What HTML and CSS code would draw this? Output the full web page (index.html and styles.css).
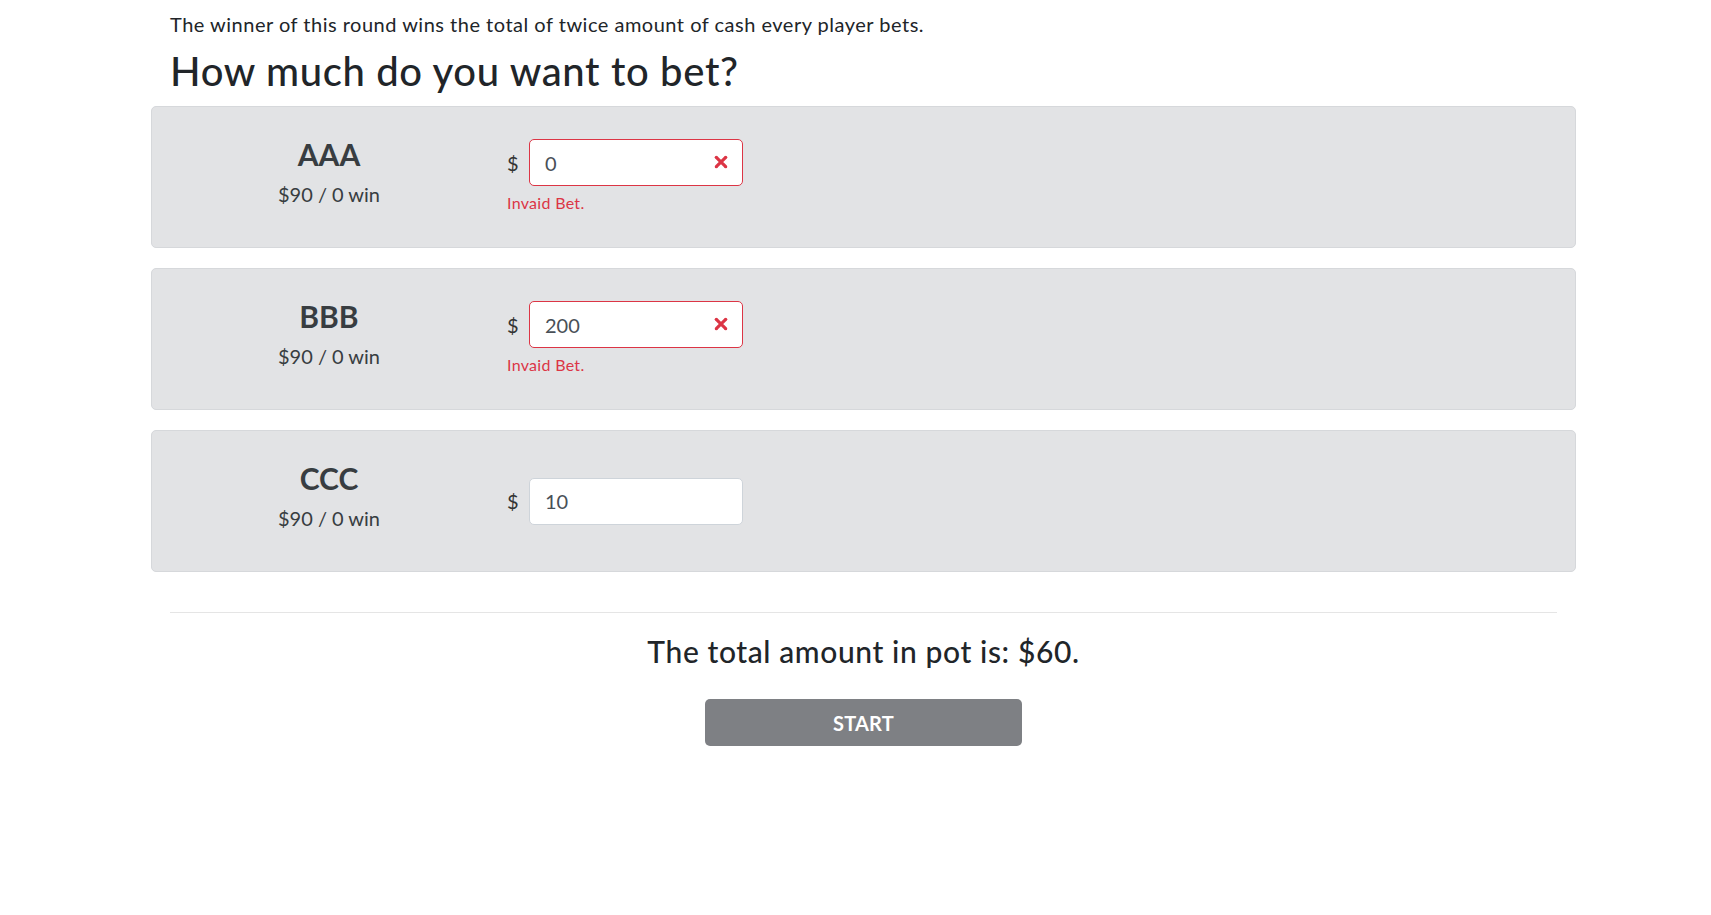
FILE: index.html
```html
<!DOCTYPE html>
<html lang="en">
<head>
<meta charset="utf-8">
<title>Bet</title>
<link rel="stylesheet" href="styles.css">
</head>
<body>
<div class="container">
  <p class="intro">The winner of this round wins the total of twice amount of cash every player bets.</p>
  <h2 class="title">How much do you want to bet?</h2>

  <div class="player">
    <div class="player-info">
      <div class="player-name">AAA</div>
      <div class="player-stats">$90 / 0 win</div>
    </div>
    <div class="bet">
      <div class="bet-group">
        <span class="currency">$</span>
        <div class="field">
          <input class="bet-input invalid" type="text" value="0">
          <svg class="invalid-icon" viewBox="-2 -2 7 7" width="22" height="22"><path stroke="#dc3545" stroke-width="1" d="M0 0l3 3m0-3L0 3"/><circle fill="#dc3545" r=".5"/><circle fill="#dc3545" cx="3" r=".5"/><circle fill="#dc3545" cy="3" r=".5"/><circle fill="#dc3545" cx="3" cy="3" r=".5"/></svg>
        </div>
      </div>
      <div class="feedback">Invaid Bet.</div>
    </div>
  </div>

  <div class="player">
    <div class="player-info">
      <div class="player-name">BBB</div>
      <div class="player-stats">$90 / 0 win</div>
    </div>
    <div class="bet">
      <div class="bet-group">
        <span class="currency">$</span>
        <div class="field">
          <input class="bet-input invalid" type="text" value="200">
          <svg class="invalid-icon" viewBox="-2 -2 7 7" width="22" height="22"><path stroke="#dc3545" stroke-width="1" d="M0 0l3 3m0-3L0 3"/><circle fill="#dc3545" r=".5"/><circle fill="#dc3545" cx="3" r=".5"/><circle fill="#dc3545" cy="3" r=".5"/><circle fill="#dc3545" cx="3" cy="3" r=".5"/></svg>
        </div>
      </div>
      <div class="feedback">Invaid Bet.</div>
    </div>
  </div>

  <div class="player">
    <div class="player-info">
      <div class="player-name">CCC</div>
      <div class="player-stats">$90 / 0 win</div>
    </div>
    <div class="bet">
      <div class="bet-group">
        <span class="currency">$</span>
        <div class="field">
          <input class="bet-input" type="text" value="10">
        </div>
      </div>
    </div>
  </div>

  <hr class="divider">
  <h4 class="pot">The total amount in pot is: $60.</h4>
  <div class="actions">
    <button class="start-btn" type="button">START</button>
  </div>
</div>
</body>
</html>
```

FILE: styles.css
```css
html, body {
  margin: 0;
  padding: 0;
  background: #ffffff;
}

body {
  font-family: "Lato", "Open Sans", sans-serif;
  font-size: 20px;
  color: #212529;
}

.container {
  width: 1425px;
  margin-left: 151px;
  padding-top: 9px;
}

.intro {
  margin: 0 0 8px 0;
  padding: 0 19px;
  font-size: 20px;
  line-height: 30px;
  letter-spacing: 0.5px;
  color: #212529;
}

.title {
  margin: 0 0 11px 0;
  padding: 0 19px;
  font-size: 40px;
  line-height: 48px;
  font-weight: 500;
  letter-spacing: 0.65px;
  color: #212529;
}

.player {
  box-sizing: border-box;
  height: 142px;
  margin-bottom: 20px;
  background: #e2e3e5;
  border: 1px solid #d6d8db;
  border-radius: 5px;
  display: flex;
  align-items: center;
  color: #383d41;
}

.player-info {
  width: 354px;
  flex: 0 0 354px;
  text-align: center;
  padding-bottom: 10px;
}

.player-name {
  font-size: 30px;
  line-height: 36px;
  font-weight: 700;
  margin-bottom: 7px;
}

.player-stats {
  font-size: 20px;
  line-height: 30px;
}

.bet {
  display: flex;
  flex-direction: column;
}

.bet-group {
  display: flex;
  align-items: center;
}

.currency {
  font-size: 20px;
  width: 22px;
  padding-left: 1px;
  color: #333333;
}

.field {
  position: relative;
  width: 214px;
  height: 47px;
}

.bet-input {
  box-sizing: border-box;
  width: 214px;
  height: 47px;
  margin: 0;
  padding: 0 15px;
  border: 1px solid #ced4da;
  border-radius: 5px;
  background: #ffffff;
  font-family: "Lato", "Open Sans", sans-serif;
  font-size: 20px;
  color: #495057;
  outline: none;
}

.bet-input.invalid {
  border-color: #dc3545;
  padding-right: 45px;
}

.invalid-icon {
  position: absolute;
  right: 11px;
  top: 12px;
}

.feedback {
  margin-top: 5px;
  padding-left: 1px;
  font-size: 16px;
  line-height: 24px;
  letter-spacing: 0.3px;
  color: #dc3545;
}

.divider {
  margin: 0 19px;
  padding-top: 20px;
  border: 0;
  border-bottom: 1px solid #e5e5e5;
  height: 0;
  box-sizing: content-box;
}

.pot {
  margin: 20px 0 10px 0;
  text-align: center;
  font-size: 30px;
  line-height: 36px;
  font-weight: 500;
  letter-spacing: 0.6px;
  color: #212529;
}

.actions {
  display: flex;
  justify-content: center;
  padding-top: 20px;
}

.start-btn {
  width: 317px;
  height: 47px;
  border: 0;
  border-radius: 5px;
  background: #7e8084;
  color: #ffffff;
  font-family: "Lato", "Open Sans", sans-serif;
  font-size: 20px;
  font-weight: 700;
  letter-spacing: 0.2px;
}
```
